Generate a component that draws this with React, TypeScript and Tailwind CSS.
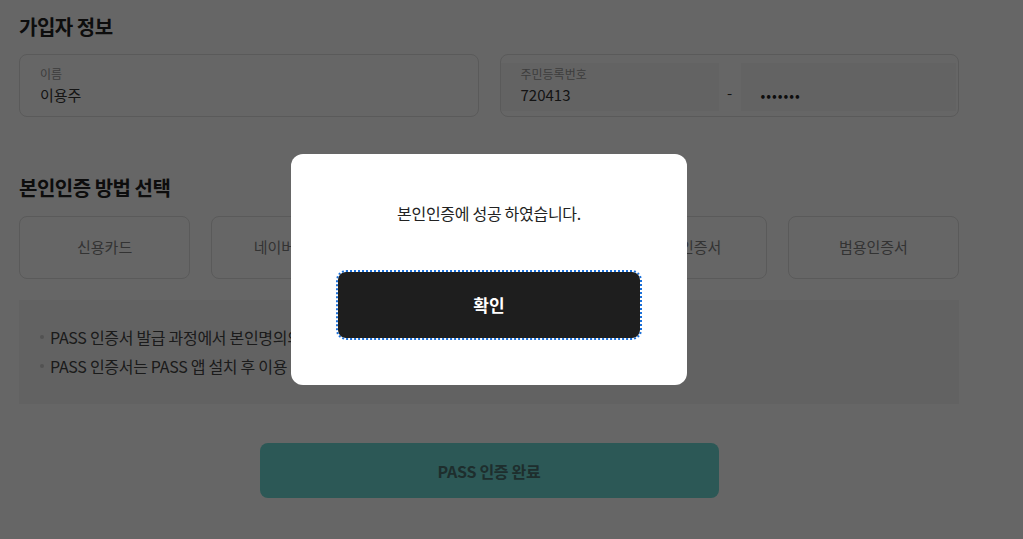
import { useEffect, useRef } from "react";

const methods = ["신용카드", "네이버 인증서", "카카오 인증서", "PASS 인증서", "범용인증서"];

const notices = [
  "PASS 인증서 발급 과정에서 본인명의의 휴대폰 인증이 필요합니다.",
  "PASS 인증서는 PASS 앱 설치 후 이용 가능합니다.",
];

export default function App() {
  const okRef = useRef<HTMLButtonElement>(null);

  useEffect(() => {
    okRef.current?.focus();
  }, []);

  return (
    <div
      className="relative min-h-[539px] bg-white text-[#222]"
      style={{ fontFamily: '"Noto Sans CJK KR", "Noto Sans", sans-serif' }}
    >
      <main className="px-[19px] pt-[12px] w-[978px]">
        <h2 className="text-[20px] font-bold leading-[30px] tracking-[-0.5px]">가입자 정보</h2>

        <div className="mt-[12px] grid grid-cols-2 gap-[21px]">
          <div className="h-[63px] rounded-[8px] border border-[#e0e0e0] px-[20px] pt-[10px]">
            <div className="text-[12px] leading-[18px] text-[#999]">이름</div>
            <div className="text-[15px] leading-[24px] text-[#333]">이용주</div>
          </div>
          <div className="h-[63px] rounded-[8px] border border-[#e0e0e0] flex items-start pt-[8px] pb-[5px] pr-[2px]">
            <div className="h-[48px] w-[218px] bg-[#f8f8f8] pl-[20px] pt-[2px]">
              <div className="text-[12px] leading-[18px] text-[#999]">주민등록번호</div>
              <div className="text-[15px] leading-[24px] text-[#333]">720413</div>
            </div>
            <div className="w-[22px] text-center text-[15px] leading-[24px] mt-[18px] text-[#333]">-</div>
            <div className="h-[48px] flex-1 bg-[#f8f8f8] pl-[20px] pt-[20px]">
              <div className="text-[14px] leading-[24px] tracking-[1px] text-[#222]">•••••••</div>
            </div>
          </div>
        </div>

        <h2 className="mt-[56px] text-[20px] font-bold leading-[30px] tracking-[-0.5px]">본인인증 방법 선택</h2>

        <div className="mt-[13px] grid grid-cols-5 gap-[21px]">
          {methods.map((m) => (
            <button
              key={m}
              className="h-[63px] rounded-[8px] border border-[#e0e0e0] bg-white text-[15px] text-[#808080]"
            >
              {m}
            </button>
          ))}
        </div>

        <ul className="mt-[21px] h-[104px] bg-[#f5f5f5] px-[21px] pt-[25px] flex flex-col gap-[5px]">
          {notices.map((n) => (
            <li key={n} className="flex items-center gap-[6px] text-[16px] leading-[24px] text-[#444] tracking-[-0.3px]">
              <span className="w-[4px] h-[4px] rounded-full bg-[#ccc]" />
              {n}
            </li>
          ))}
        </ul>

        <div className="mt-[39px] flex justify-center">
          <button className="h-[55px] w-[459px] rounded-[8px] bg-[#6edcd7] text-[16px] font-bold text-[#4b7371] tracking-[-0.3px]">
            PASS 인증 완료
          </button>
        </div>
      </main>

      <div className="absolute inset-0 bg-black/60" />

      <div className="absolute left-[291px] top-[154px] w-[396px] h-[231px] rounded-[12px] bg-white px-[47px] pt-[47px] flex flex-col items-center">
        <p className="text-[16px] leading-[24px] text-[#222] tracking-[-0.3px]">본인인증에 성공 하였습니다.</p>
        <button
          ref={okRef}
          className="mt-[47px] h-[66px] w-[302px] rounded-[8px] bg-[#1e1e1e] text-[17px] font-bold text-white outline-2 outline-dotted outline-[#1a6fd8] outline-offset-0"
        >
          확인
        </button>
      </div>
    </div>
  );
}
